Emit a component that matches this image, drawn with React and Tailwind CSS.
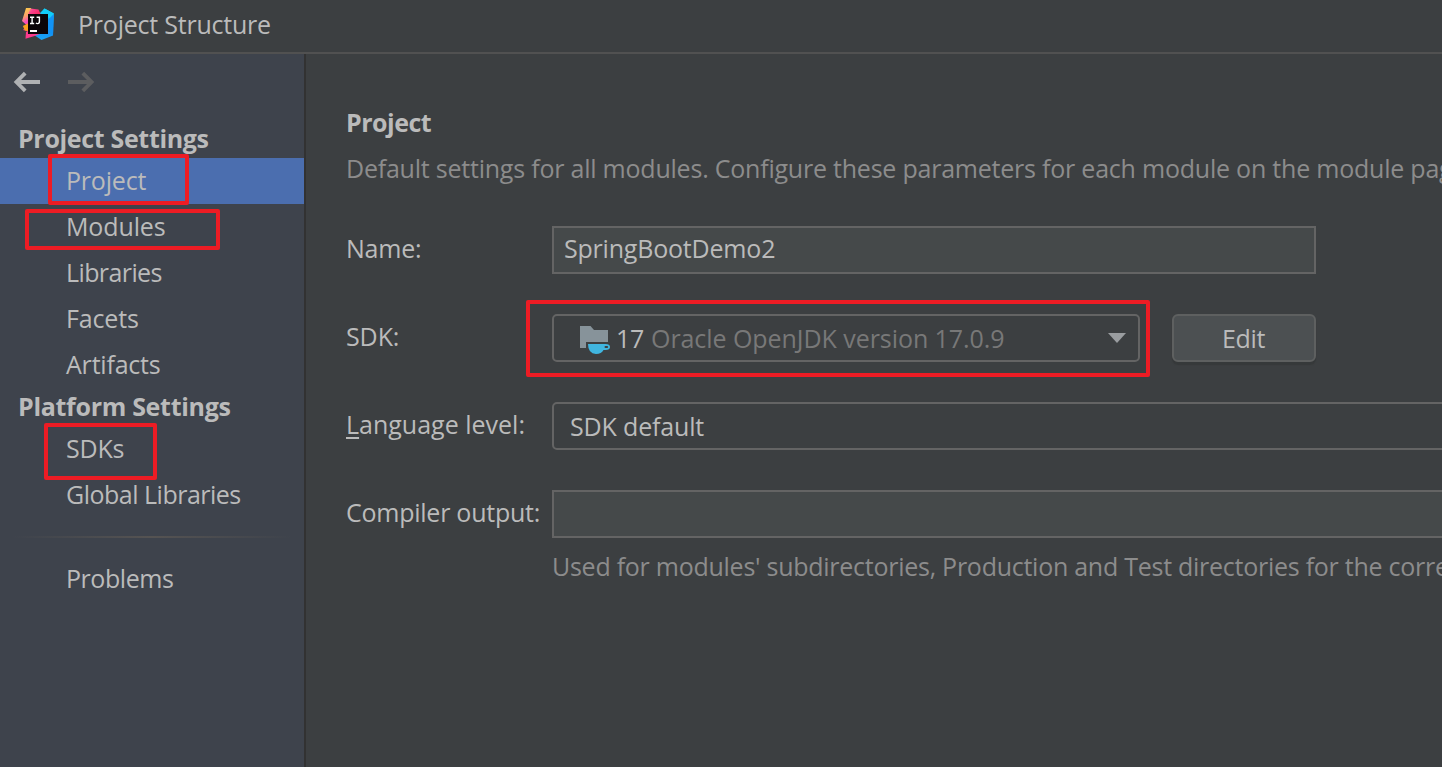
function Logo() {
  return (
    <svg className="block h-9 w-9 shrink-0" viewBox="0 0 36 36">
      <defs>
        <linearGradient id="warm" x1="0.2" y1="0" x2="0.4" y2="1">
          <stop offset="0" stopColor="#fbd04a" />
          <stop offset="0.35" stopColor="#fba06a" />
          <stop offset="0.6" stopColor="#f84bc0" />
          <stop offset="1" stopColor="#fc3f60" />
        </linearGradient>
        <linearGradient id="cool" x1="0.6" y1="0" x2="0.4" y2="1">
          <stop offset="0" stopColor="#10e4fb" />
          <stop offset="0.5" stopColor="#0f86f2" />
          <stop offset="1" stopColor="#1ba6f5" />
        </linearGradient>
        <linearGradient id="pink" x1="0" y1="0" x2="1" y2="0.4">
          <stop offset="0" stopColor="#fba07d" />
          <stop offset="0.4" stopColor="#fb3f8d" />
          <stop offset="1" stopColor="#fb2a63" />
        </linearGradient>
      </defs>
      <path d="M20 7 L24.5 2.5 L33.8 7.5 L33 29.5 L21.5 34 L14 29 Z" fill="url(#cool)" />
      <path d="M24.5 2.5 L33.8 7.5 L30 12 L20 9 Z" fill="#12cdf8" />
      <path d="M28 14 L33.8 8 L33 29.5 L28 24 Z" fill="#1292f4" />
      <path d="M6 2 L11 2 L12 14 L10 26 L3 24 L7 19.5 L2 15 Z" fill="url(#warm)" />
      <path d="M2.8 20 L9 17 L9 25 L5 24.5 Z" fill="#fba01e" />
      <path d="M10.5 2.5 L18.5 3.5 L21 9 L8 9 Z" fill="url(#pink)" />
      <path d="M8 25 L22 27 L14.5 30 L5.5 32.8 L6 26 Z" fill="#fc3a8c" />
      <rect x="8" y="8" width="20" height="20" fill="#0b0508" />
      <path d="M10 11.2 H14.2 M12.1 11 V17.6 M10 17.5 H14.2" stroke="#fff" strokeWidth="1.4" fill="none" />
      <path d="M16.6 11.2 H19.4 V15.6 Q19.4 17.6 17.8 17.6 Q16.6 17.6 16 16.8" stroke="#fff" strokeWidth="1.4" fill="none" />
      <rect x="10" y="24" width="7" height="2" fill="#fff" />
    </svg>
  );
}

function Arrow({ className }) {
  return (
    <svg className={className} viewBox="0 0 28 22" fill="none" stroke="currentColor" strokeWidth="3.8">
      <path d="M27 11 H4 M12.2 2.2 L3.4 11 L12.2 19.8" />
    </svg>
  );
}

function SdkIcon() {
  return (
    <svg className="block h-8 w-8 shrink-0" viewBox="0 0 32 32">
      <path d="M1 4 H11.5 L15 8 H29 V20 H7 V26 H1 Z" fill="#87939a" />
      <path d="M9 22 H26.5 Q31 22 31 25 Q31 28 26.5 28 H24.5 Q22.5 32 17 32 Q9 31.5 9 22 Z" fill="#40b6e0" />
      <rect x="25.5" y="24" width="3.6" height="2" rx="1" fill="#3c3f41" />
    </svg>
  );
}

function Item({ children, className = '' }) {
  return <div className={'h-[46px] pl-[66px] leading-[45px] ' + className}>{children}</div>;
}

function Mark({ className }) {
  return <div className={'pointer-events-none absolute rounded-[2px] border-4 border-[#ed1c24] ' + className} />;
}

function Sidebar() {
  return (
    <nav className="w-[306px] shrink-0 border-r-2 border-[#323232] bg-[#3e434c]">
      <div className="flex h-[66px] items-start gap-[26px] pt-[17px] pl-[13px]">
        <Arrow className="block h-[22px] w-7 text-[#afb1b3]" />
        <Arrow className="block h-[22px] w-7 rotate-180 text-[#5c5d5f]" />
      </div>
      <div className="h-[38px] pl-[18px] leading-[36px] font-bold tracking-[-0.33px]">Project Settings</div>
      <div className="relative">
        <Item className="bg-[#4b6eaf] tracking-[-0.2px]">Project</Item>
        <Mark className="-top-1 left-12 h-[51px] w-[141px]" />
      </div>
      <div className="relative">
        <Item className="tracking-[-0.12px]">Modules</Item>
        <Mark className="top-[5px] left-[25px] h-[41px] w-[195px]" />
      </div>
      <Item className="tracking-[-0.6px]">Libraries</Item>
      <Item className="tracking-[-0.15px]">Facets</Item>
      <Item className="tracking-[-0.2px]">Artifacts</Item>
      <div className="h-[38px] pl-[18px] leading-[36px] font-bold tracking-[-0.3px]">Platform Settings</div>
      <div className="relative">
        <Item className="tracking-[-0.2px]">SDKs</Item>
        <Mark className="-top-[3px] left-11 h-[57px] w-[113px]" />
      </div>
      <Item className="tracking-[-0.5px]">Global Libraries</Item>
      <div className="mx-3 mt-[18px] mb-[18px] h-0.5 bg-linear-to-r from-transparent via-[#555352] to-transparent" />
      <Item className="tracking-[-0.45px]">Problems</Item>
    </nav>
  );
}

function Row({ label, className = '', children }) {
  return (
    <div className="flex h-12 w-[1200px] shrink-0">
      <div className={'w-[207px] shrink-0 pl-px leading-[45px] ' + className}>{label}</div>
      {children}
    </div>
  );
}

function Main() {
  return (
    <main className="min-w-0 flex-1 overflow-hidden pt-12 pl-[39px] whitespace-nowrap">
      <h1 className="pl-px leading-10 font-bold tracking-[-0.5px]">Project</h1>
      <p className="mt-1.5 pl-px leading-10 tracking-[-0.22px] text-[#8c8c8c]">
        Default settings for all modules. Configure these parameters for each module on the module page if needed.
      </p>
      <div className="mt-[38px] flex flex-col gap-10">
        <Row label="Name:" className="tracking-[-0.2px]">
          <div className="h-12 w-[764px] border-2 border-[#646464] bg-[#45494a] pl-[10px] leading-[41px] tracking-[-0.2px]">
            SpringBootDemo2
          </div>
        </Row>
        <Row label="SDK:" className="tracking-[-0.1px]">
          <div className="relative flex h-12 w-[588px] items-center rounded-[5px] border-2 border-[#646464] pl-[25px]">
            <SdkIcon />
            <span className="ml-[5px] pt-px tracking-[-0.3px]">17</span>
            <span className="ml-[7px] pt-px tracking-[-0.06px] text-[#787878]">Oracle OpenJDK version 17.0.9</span>
            <svg className="mr-3 ml-auto block h-2.5 w-[18px]" viewBox="0 0 18 10">
              <path d="M0 0 H18 L9 10 Z" fill="#9a9da0" />
            </svg>
            <Mark className="-top-4 -left-7 h-[77px] w-[624px]" />
          </div>
          <button className="ml-8 h-12 w-36 rounded-[6px] border-2 border-[#5e6060] bg-[#4c5052] pr-px text-center leading-[44px] tracking-[-0.33px] shadow-[0_3px_1px_#36393a]">
            Edit
          </button>
        </Row>
        <Row
          label={<><span className="underline decoration-2 underline-offset-[3px]">L</span>anguage level:</>}
          className="tracking-[0px]"
        >
          <div className="h-12 w-[950px] rounded-[5px] border-2 border-[#646464] pl-4 leading-[44px] tracking-[-0.16px]">
            SDK default
          </div>
        </Row>
        <Row label="Compiler output:" className="tracking-[-0.25px]">
          <div className="h-12 w-[950px] border-2 border-[#646464] bg-[#45494a]" />
        </Row>
      </div>
      <p className="mt-2 pl-[207px] leading-10 tracking-[-0.26px] text-[#8c8c8c]">
        Used for modules' subdirectories, Production and Test directories for the corresponding sources.
      </p>
    </main>
  );
}

export default function App() {
  return (
    <div className="flex h-[767px] w-[1442px] flex-col overflow-hidden bg-[#3c3f41] font-['Open_Sans','Noto_Sans',sans-serif] text-[25px] text-[#bbbbbb]">
      <header className="flex h-[54px] shrink-0 items-start border-b-2 border-[#515151] pl-5">
        <div className="pt-1.5">
          <Logo />
        </div>
        <div className="ml-[22px] leading-[49px] tracking-[-0.22px]">Project Structure</div>
      </header>
      <div className="flex min-h-0 flex-1">
        <Sidebar />
        <Main />
      </div>
    </div>
  );
}
